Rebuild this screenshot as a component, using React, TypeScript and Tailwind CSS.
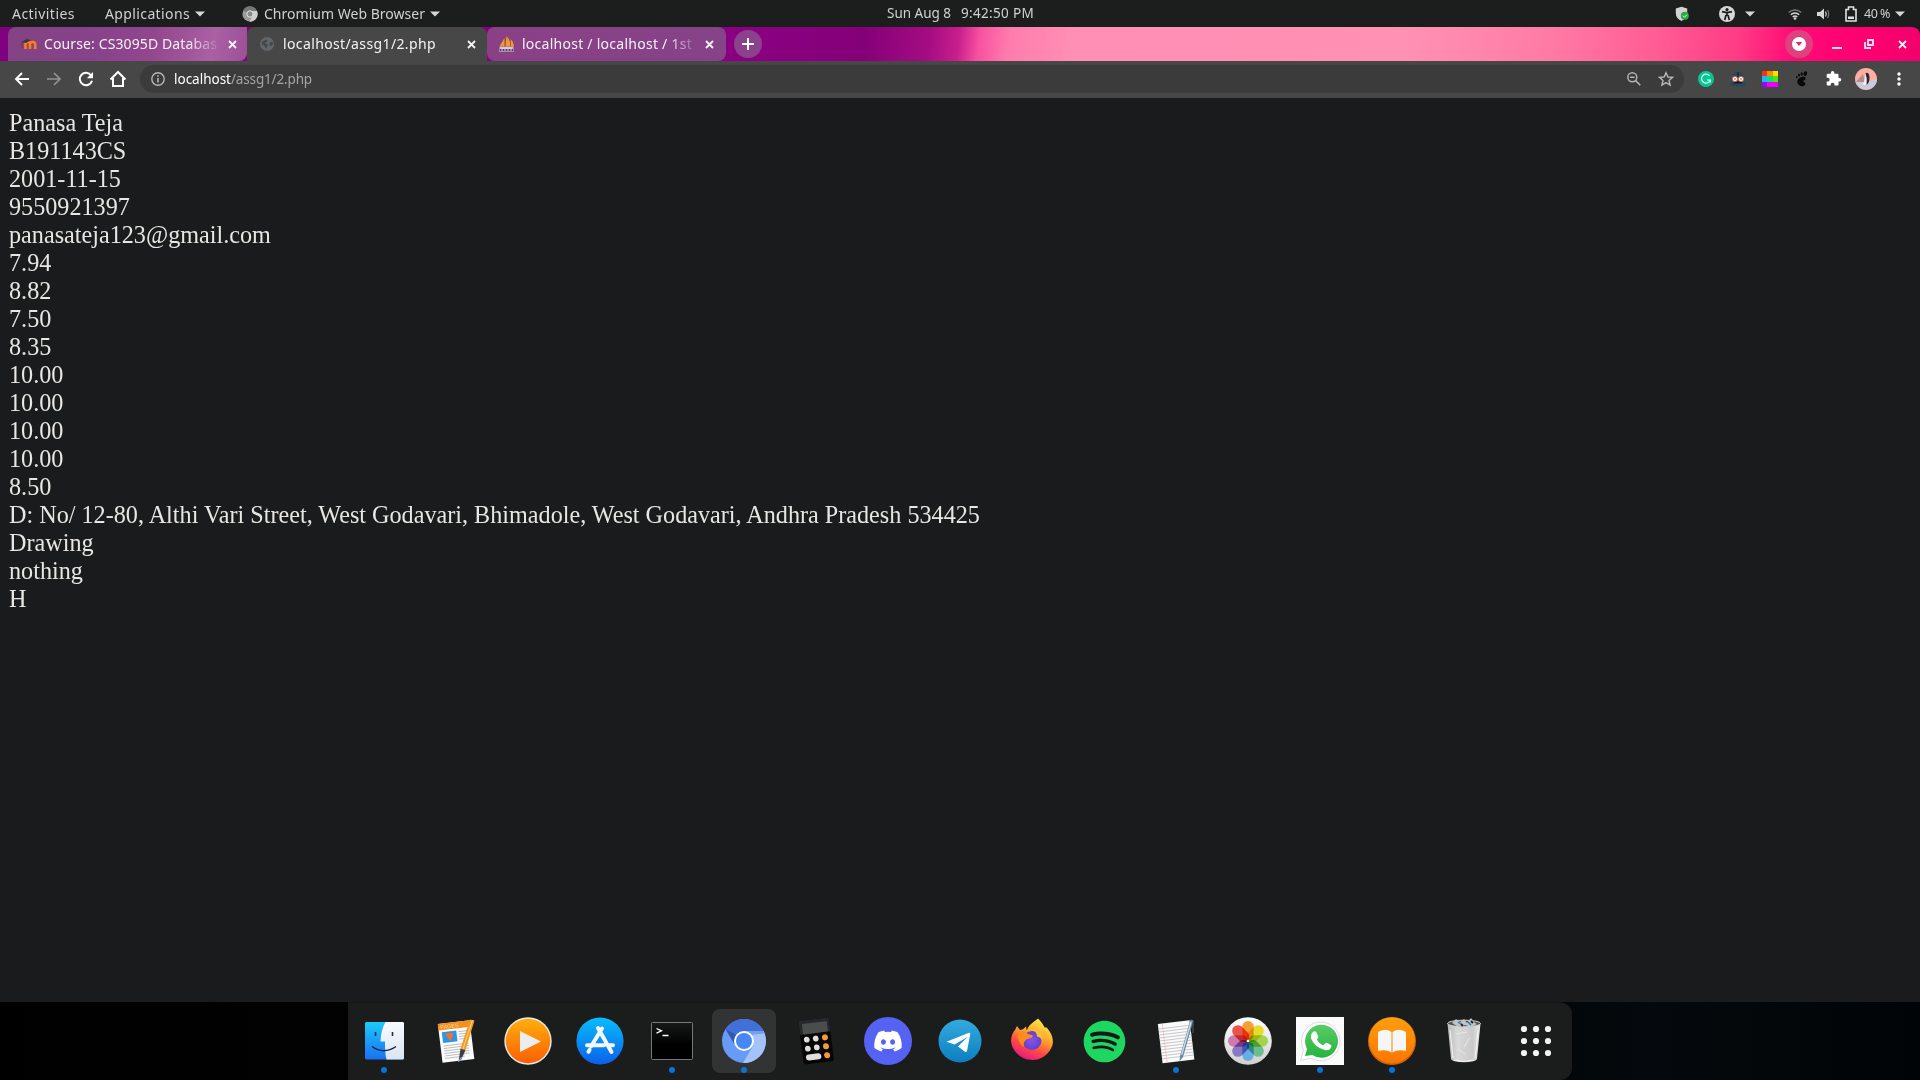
import { useLayoutEffect, useRef, useState } from "react";
import type { ReactNode } from "react";
import { FaDiscord, FaSpotify } from "react-icons/fa";

/* Text that spreads its letters to occupy a given width. */
function Fit({ w, className = "", children }: { w: number; className?: string; children: ReactNode }) {
  const ref = useRef<HTMLSpanElement>(null);
  const [spacing, setSpacing] = useState(0);
  useLayoutEffect(() => {
    const el = ref.current;
    if (!el) return;
    const n = (el.textContent || "").length;
    setSpacing((w - el.getBoundingClientRect().width) / n);
  }, [w]);
  return (
    <span ref={ref} style={{ letterSpacing: `${spacing}px` }} className={`inline-block whitespace-pre ${className}`}>
      {children}
    </span>
  );
}

const Arrow = ({ className = "" }: { className?: string }) => (
  <svg className={`shrink-0 ${className}`} width="10" height="6" viewBox="0 0 10 6">
    <path d="M0 .5h10L5 5.5z" fill="#d6d6d6" />
  </svg>
);

const Cross = ({ className = "" }: { className?: string }) => (
  <svg className={`shrink-0 ${className}`} width="9" height="9" viewBox="0 0 9 9">
    <path d="M1 1l7 7M8 1L1 8" stroke="#f4f4f4" strokeWidth="1.8" />
  </svg>
);

function TopBar() {
  return (
    <header className="flex h-[27px] items-center bg-[#1c1e1d] text-[14px] leading-[27px] text-[#d0d0d0]">
      <div className="flex h-full w-[105px] items-center pl-3"><Fit w={63}>Activities</Fit></div>
      <div className="flex h-full w-[137px] items-center">
        <Fit w={85}>Applications</Fit>
        <Arrow className="ml-[5px]" />
      </div>
      <div className="flex h-full w-[645px] items-center">
        <svg width="16" height="16" viewBox="0 0 16 16" className="mr-[6px]">
          <circle cx="8" cy="8" r="7.6" fill="#9c9c9c" />
          <path d="M8 8L1.2 4.4A7.6 7.6 0 0 1 15 5H8z" fill="#777" />
          <path d="M15 5A7.6 7.6 0 0 1 7.3 15.6L11 9.5 10 5z" fill="#cfcfcf" />
          <circle cx="8" cy="8" r="3.2" fill="#8a8a8a" stroke="#e6e6e6" />
        </svg>
        <Fit w={161}>Chromium Web Browser</Fit>
        <Arrow className="ml-[5px]" />
      </div>
      <div className="flex h-full flex-1 items-center">
        <Fit w={64} className="mr-[10px] text-[13.5px]">Sun Aug 8</Fit>
        <Fit w={73} className="text-[13.5px]">9:42:50 PM</Fit>
      </div>
      <div className="flex h-full w-[245px] items-center">
        <svg width="14" height="16" viewBox="0 0 14 16">
          <path d="M6.500 .8L12.200 2.500V7q0 5.500-5.700 8Q.8 12.500.8 7V2.500z" fill="#d2d2d2" />
          <circle cx="9.800" cy="9.700" r="4" fill="#2fa84a" />
          <path d="M8 9.700l1.500 1.500L12 8.600" fill="none" stroke="#dff5e2" />
        </svg>
        <svg width="16" height="16" viewBox="0 0 16 16" className="ml-[30px]">
          <circle cx="8" cy="8" r="8" fill="#d6d6d6" />
          <circle cx="8" cy="3.600" r="1.600" fill="#1c1c1c" />
          <path d="M3 5.600l3.500.8h3L13 5.600M8 6v4M7 9l-1.300 5M9 9l1.300 5" stroke="#1c1c1c" strokeWidth="1.700" fill="none" />
        </svg>
        <Arrow className="ml-[10px]" />
        <svg width="14" height="12" viewBox="0 0 14 12" className="ml-[33px]">
          <path d="M.8 4.500a9 9 0 0 1 12.400 0" stroke="#777" strokeWidth="1.500" fill="none" />
          <path d="M2.800 6.800a6 6 0 0 1 8.400 0M4.700 9a3.400 3.400 0 0 1 4.600 0" stroke="#d6d6d6" strokeWidth="1.500" fill="none" />
          <circle cx="7" cy="10.500" r="1.300" fill="#d6d6d6" />
        </svg>
        <svg width="13" height="12" viewBox="0 0 13 12" className="ml-[15px]">
          <path d="M0 4h3l4-3.500v11L3 8H0z" fill="#d6d6d6" />
          <path d="M8.500 3.500q1.600 2.500 0 5" stroke="#d6d6d6" strokeWidth="1.200" fill="none" />
          <path d="M10.500 2q2.500 4 0 8" stroke="#777" strokeWidth="1.200" fill="none" />
        </svg>
        <svg width="12" height="16" viewBox="0 0 12 16" className="ml-[15px]">
          <path d="M1 3.500h2.500V1h5v2.500H11V15H1z" fill="none" stroke="#e0e0e0" strokeWidth="1.600" />
          <path d="M3 10.500h6v2.500H3z" fill="#e0e0e0" />
        </svg>
        <Fit w={26} className="ml-[7px] text-[12.5px]">40 %</Fit>
        <Arrow className="ml-[5px]" />
      </div>
    </header>
  );
}

function TabStrip() {
  return (
    <div className="flex h-[34px] rounded-tr-lg bg-[linear-gradient(96deg,#810081_0px,#8b0082_740px,#840078_860px,#a50c82_925px,#c81f8c_955px,#f850a0_975px,#ff7cac_1005px,#ff8fb5_1070px,#ff91b4_1400px,#ff7ba6_1540px,#ff5c94_1650px,#ff3c85_1730px,#ff0b76_1785px,#ff0070_1850px,#f0006b_1920px)] text-[14px] leading-[34px] text-[#f6f2f6]">
      <div className="ml-2 flex h-full w-[239px] items-center rounded-tl-lg rounded-br-lg bg-[linear-gradient(100deg,#834383_0%,#87428a_35%,#92468e_60%,#aa60a3_85%,#9d4f98_100%)] pl-3">
        <svg width="17" height="12" viewBox="0 0 17 12">
          <path d="M5.500 11V6q0-2 2.200-2T10 6v5M10 6q0-2 2.500-2T15.200 6v5" fill="none" stroke="#f98012" strokeWidth="2.600" />
          <path d="M1 4l6-3 4 1-5 3z" fill="#3e3638" />
          <path d="M2 4v6" stroke="#7e3148" />
        </svg>
        <span className="ml-[7px] w-[174px] overflow-hidden [mask-image:linear-gradient(90deg,#000_143px,transparent_178px)]">
          <Fit w={173}>Course: CS3095D Databas</Fit>
        </span>
        <Cross className="ml-[10px]" />
      </div>
      <div className="flex h-full w-[240px] items-center rounded-t-lg bg-[#474747] pl-[13px]">
        <svg width="14" height="14" viewBox="0 0 14 14">
          <circle cx="7" cy="7" r="7" fill="#62666b" />
          <path d="M2 5l3.500-2.500 2 .8-.7 1.700-1.800 1 3 1.500-.5 2-1.500 2-1.500-2.500L2 7.500zM9.500 5.500l3-1 .3 3-1.500 2-1.800-1.500z" fill="#46494c" />
        </svg>
        <Fit w={153} className="ml-[9px]">localhost/assg1/2.php</Fit>
        <Cross className="ml-[30.5px]" />
      </div>
      <div className="flex h-full w-[239px] items-center rounded-lg bg-[linear-gradient(90deg,#8b4086,#854388)] pl-[11px]">
        <svg width="17" height="16" viewBox="0 0 17 16">
          <path d="M6.500 2v8.500H1.500zM8.500 0q4 4 4 10.500H7.500zM12.500 3q4 4 3.500 7.500H13z" fill="#f39a20" />
          <path d="M7.500 2v8.500M12.500 5v5.500" stroke="#8b5a70" strokeWidth=".6" />
          <path d="M1 10.800h15L14 13H3z" fill="#d2c9d2" />
          <path d="M1 14h15" stroke="#d8d0dc" strokeWidth="3" />
          <path d="M1.500 14h15" stroke="#514076" strokeWidth="2" strokeDasharray="2 1" />
        </svg>
        <span className="ml-[7px] w-[174px] overflow-hidden [mask-image:linear-gradient(90deg,#000_145px,transparent_178px)]">
          <Fit w={170}>localhost / localhost / 1st</Fit>
        </span>
        <Cross className="ml-[9px]" />
      </div>
      <div className="ml-2 mt-[3px] flex size-7 items-center justify-center rounded-full bg-[#8b418b]">
        <svg width="12" height="12" viewBox="0 0 12 12"><path d="M6 0v12M0 6h12" stroke="#fff" strokeWidth="2" /></svg>
      </div>
      <div className="ml-auto flex h-full w-[135px] items-center">
        <div className="flex size-7 items-center justify-center rounded-full bg-[#df4080]">
          <svg width="14" height="14" viewBox="0 0 14 14"><circle cx="7" cy="7" r="7" fill="#fff" /><path d="M3.800 5h6.400L7 9z" fill="#df2870" /></svg>
        </div>
        <svg width="12" height="10" viewBox="0 0 12 10" className="ml-[18px]"><path d="M1 9h10" stroke="#fbe3ed" strokeWidth="2" /></svg>
        <svg width="10" height="10" viewBox="0 0 10 10" className="ml-[21px]">
          <path d="M4 1h5v5H4zM1 3v6h6" fill="none" stroke="#fbe3ed" strokeWidth="1.800" />
        </svg>
        <Cross className="ml-[23.5px]" />
      </div>
    </div>
  );
}

function Toolbar() {
  return (
    <div className="flex h-[37px] items-center bg-[#474747] pb-px pl-[14px]">
      <svg width="16" height="14" viewBox="0 0 16 14"><path d="M15 7H2M8 1L2 7l6 6" stroke="#fff" strokeWidth="1.900" fill="none" /></svg>
      <svg width="16" height="14" viewBox="0 0 16 14" className="ml-4"><path d="M1 7h13M8 1l6 6-6 6" stroke="#929292" strokeWidth="1.700" fill="none" /></svg>
      <svg width="16" height="16" viewBox="0 0 16 16" className="ml-4">
        <path d="M13.200 4.500A6.200 6.200 0 1 0 14 9.700" stroke="#fff" strokeWidth="2" fill="none" />
        <path d="M15 1v6.200H8.800z" fill="#fff" />
      </svg>
      <svg width="18" height="18" viewBox="0 0 18 18" className="ml-[15px]">
        <path d="M1.500 9.500L9 2l7.500 7.500M4 8v8h10V8" stroke="#fff" strokeWidth="2" fill="none" />
      </svg>
      <div className="ml-[13px] flex h-7 w-[1544px] items-center rounded-full bg-[#3b3b3b] pl-[11px] text-[13.5px] leading-7">
        <svg width="14" height="14" viewBox="0 0 14 14">
          <circle cx="7" cy="7" r="6.200" fill="none" stroke="#b6b6b6" strokeWidth="1.400" />
          <path d="M7 6v4.500M7 3.300v1.500" stroke="#b6b6b6" strokeWidth="1.600" />
        </svg>
        <Fit w={57} className="ml-[9px] text-white">localhost</Fit>
        <Fit w={81} className="text-[#a5a5a5]">/assg1/2.php</Fit>
        <svg width="14" height="14" viewBox="0 0 14 14" className="ml-auto">
          <circle cx="5.300" cy="5.300" r="4.500" fill="none" stroke="#b4b4b4" strokeWidth="1.500" />
          <path d="M8.600 8.600l4.700 4.700M3 5.300h4.600" stroke="#b4b4b4" strokeWidth="1.500" />
        </svg>
        <svg width="16" height="16" viewBox="0 0 16 16" className="ml-[17px] mr-[10px]">
          <path d="M8 1.800l1.900 4.200 4.600.4-3.500 3 1.100 4.600L8 11.600 3.900 14 5 9.400 1.500 6.400 6.100 6z" fill="none" stroke="#b8b8b8" strokeWidth="1.400" />
        </svg>
      </div>
      <div className="ml-[14px] flex items-center gap-4">
        <svg width="16" height="16" viewBox="0 0 16 16">
          <circle cx="8" cy="8" r="8" fill="#06c894" />
          <path d="M11.500 4.800A4.500 4.500 0 1 0 12.300 9H9M12.300 8.500v3" fill="none" stroke="#e9fff7" strokeWidth="1.200" />
        </svg>
        <svg width="16" height="16" viewBox="0 0 16 16">
          <path d="M2.500 8Q2 1 8 1t5.500 7L16 14q-4 1.500-8 1.500T0 14z" fill="#23495b" />
          <path d="M8 1v7M4 12h8l-2-4H6z" stroke="#101d29" fill="#142232" />
          <circle cx="5" cy="8" r="2.600" fill="#fff" stroke="#e0604a" />
          <circle cx="11" cy="8" r="2.600" fill="#fff" stroke="#e0604a" />
          <path d="M5 7.200v1.600M11 7.200v1.600" stroke="#444" />
        </svg>
        <svg width="16" height="16" viewBox="0 0 16 16" shapeRendering="crispEdges">
          <path d="M0 0h5v5H0z" fill="#ff3200" /><path d="M5 0h6v5H5z" fill="#ff8a00" /><path d="M11 0h5v5h-5z" fill="#ffdf00" />
          <path d="M0 5h5v6H0z" fill="#18b9ff" /><path d="M5 5h6v6H5z" fill="#13dc78" /><path d="M11 5h5v6h-5z" fill="#4fe800" />
          <path d="M0 11h5v5H0z" fill="#9d00ff" /><path d="M5 11h11v5H5z" fill="#ef00ff" />
        </svg>
        <svg width="16" height="16" viewBox="0 0 16 16">
          <path d="M11.500 6.500c1 2.500-2.500 2.700-2.300 4 .3 1.200 2 .3 2.100 1.800.2 2-1.500 3.200-3.300 3-3-.3-5-3-4.700-5.300C3.700 6.500 10.500 4.500 11.500 6.500z" fill="#080808" />
          <ellipse cx="11.300" cy="2.600" rx="1.700" ry="2.400" fill="#080808" transform="rotate(15 11.300 2.600)" />
          <ellipse cx="7.700" cy="3" rx="1.100" ry="1.700" fill="#080808" />
          <ellipse cx="5" cy="4.200" rx=".9" ry="1.400" fill="#080808" />
          <ellipse cx="2.800" cy="6.200" rx=".8" ry="1.100" fill="#080808" />
        </svg>
        <svg width="16" height="16" viewBox="1 1 23 23">
          <path d="M20.500 11H19V7c0-1.100-.9-2-2-2h-4V3.500a2.500 2.500 0 0 0-5 0V5H4c-1.100 0-2 .9-2 2v3.800h1.500a2.700 2.700 0 0 1 0 5.400H2V20c0 1.100.9 2 2 2h3.800v-1.500a2.700 2.700 0 0 1 5.400 0V22H17c1.100 0 2-.9 2-2v-4h1.500a2.500 2.500 0 0 0 0-5z" fill="#fff" />
        </svg>
      </div>
      <svg width="22" height="22" viewBox="0 0 22 22" className="ml-[13px]">
        <circle cx="11" cy="11" r="11" fill="#ffada0" />
        <path d="M.5 14L8 8l5 5 9-2a11 11 0 0 1-21.500 3z" fill="#c9cadd" />
        <path d="M1 14l7-8 2 8z" fill="#b28d8b" />
        <path d="M10.500 5q3-1 3 3 1 6-2 9l-4-.5q3-5 3-11.500z" fill="#f6f1ee" />
        <path d="M10.500 5q4-1 4 5 0 5-3 7 1-6-1-12z" fill="#292b30" />
      </svg>
      <svg width="4" height="14" viewBox="0 0 4 14" className="ml-[19.5px]">
        <circle cx="2" cy="2" r="1.700" fill="#fff" /><circle cx="2" cy="7" r="1.700" fill="#fff" /><circle cx="2" cy="12" r="1.700" fill="#fff" />
      </svg>
    </div>
  );
}

const LINES = [
  "Panasa Teja", "B191143CS", "2001-11-15", "9550921397", "panasateja123@gmail.com",
  "7.94", "8.82", "7.50", "8.35", "10.00", "10.00", "10.00", "10.00", "8.50",
  "D: No/ 12-80, Althi Vari Street, West Godavari, Bhimadole, West Godavari, Andhra Pradesh 534425",
  "Drawing", "nothing", "H",
];

const S = ({ children }: { children: ReactNode }) => (
  <svg width="48" height="48" viewBox="0 0 48 48">{children}</svg>
);

const PETALS = ["#f7941d", "#e4dc12", "#9fce3b", "#5fb98a", "#5aa9e6", "#7f6cc0", "#cc6da5", "#ee4136"];

const ICONS: { icon: ReactNode; running?: boolean; active?: boolean }[] = [
  {
    running: true,
    icon: (
      <S>
        <defs><linearGradient id="fa" x2="0" y2="1"><stop stopColor="#1ccbfa" /><stop offset="1" stopColor="#1b6ff2" /></linearGradient>
          <linearGradient id="fb" x2="0" y2="1"><stop stopColor="#fafbfc" /><stop offset="1" stopColor="#d9e5f4" /></linearGradient></defs>
        <rect x="5" y="5" width="39" height="37.500" rx="1.500" fill="url(#fa)" />
        <path d="M25.500 5H42.500q1.500 0 1.500 1.500V41q0 1.500-1.500 1.500H26.500q-1.700-6-1.500-18h-4.500q.5-12 5-19.500z" fill="url(#fb)" />
        <path d="M15.500 15v4M32.500 15v4" stroke="#12314f" strokeWidth="1.600" />
        <path d="M12 29.500q11.500 8.500 24 0" fill="none" stroke="#10243d" strokeWidth="1.300" />
      </S>
    ),
  },
  {
    icon: (
      <S>
        <g transform="rotate(-7 24 24)">
          <rect x="8" y="5" width="32" height="39" fill="#fbfbfb" />
          <rect x="8" y="5" width="32" height="6.500" fill="#f58f1d" />
          <text x="10" y="10.500" fontSize="5.500" fill="#ffd9a6" fontFamily="Liberation Sans">PAGES</text>
          <rect x="11" y="13.500" width="14.500" height="11" fill="#2a96e8" />
          <path d="M14 15.500h8.500l-2 5-2 2.500-2-2.500z" fill="#f4702c" />
          <path d="M27.500 15h9M27.500 17.500h9M27.500 20h9M27.500 22.500h9M11 27.500h25M11 30h25M11 32.500h25M11 35h25M11 37.500h25M11 40h20" stroke="#b9b9b9" strokeWidth=".9" />
        </g>
        <path d="M38 2.500l4.500 1L33.500 33l-5-1.300z" fill="#f49a22" />
        <path d="M40 3l1 .3L31.500 32l-1-.3z" fill="#ffd28a" />
        <path d="M28.500 31.700l5 1.300-4 9-3 3z" fill="#3b3f47" />
        <path d="M29.500 40l-3 5" stroke="#a7bdd3" />
      </S>
    ),
  },
  {
    icon: (
      <S>
        <defs><linearGradient id="pl" x2="0" y2="1"><stop stopColor="#ffae0c" /><stop offset="1" stopColor="#fb5f04" /></linearGradient></defs>
        <circle cx="24" cy="24" r="23.700" fill="#ececec" /><circle cx="24" cy="24" r="22.300" fill="url(#pl)" />
        <path d="M16 14l21 10.500L16 35z" fill="#ededed" />
      </S>
    ),
  },
  {
    icon: (
      <S>
        <defs><linearGradient id="as" x2="0" y2="1"><stop stopColor="#09bdfc" /><stop offset="1" stopColor="#0b60e9" /></linearGradient></defs>
        <circle cx="24" cy="24" r="23.600" fill="url(#as)" />
        <path d="M26 11.500L15 29.500M22 11l13.500 24M11 28.200h17M33 28.200h4M13.500 33l-1 1.800" stroke="#f2f8fd" strokeWidth="4" strokeLinecap="round" />
      </S>
    ),
  },
  {
    running: true,
    icon: (
      <S>
        <defs><linearGradient id="te" x2="0" y2="1"><stop stopColor="#171818" /><stop offset=".6" stopColor="#000" /></linearGradient></defs>
        <rect x="3.500" y="5.500" width="41" height="37" rx="1" fill="url(#te)" stroke="#737a7a" />
        <path d="M8.500 11.500l5 2.300-5 2.300M14.500 18.500h6" fill="none" stroke="#fff" strokeWidth="1.300" />
      </S>
    ),
  },
  {
    running: true,
    active: true,
    icon: (
      <S>
        <circle cx="24" cy="24" r="22" fill="#679bf6" />
        <path d="M5.500 12A22 22 0 0 1 43.500 14H24L15 28z" fill="#4170d9" />
        <path d="M5.500 12L15 28l3-9z" fill="#3157ae" />
        <path d="M43.500 14A22 22 0 0 1 23 46L33.500 28 32 18l-8-4z" fill="#a4c3fb" />
        <path d="M24 14h19.500l1 2.500L31 18z" fill="#769fe8" />
        <circle cx="24" cy="24" r="10" fill="#fff" /><circle cx="24" cy="24" r="8" fill="#4687f4" />
      </S>
    ),
  },
  {
    icon: (
      <S>
        <g transform="rotate(-7 24 24)">
          <rect x="9" y="2" width="30.500" height="44" rx="2.500" fill="#050505" />
          <path d="M9 4.500q0-2.500 2.500-2.500H37q2.500 0 2.500 2.500V16H9z" fill="#27282b" />
          <rect x="12" y="5.500" width="25" height="10.500" rx="1" fill="#4b4c4c" />
          <g fill="#dedede"><circle cx="15" cy="21.500" r="2.900" /><circle cx="24" cy="21.500" r="2.900" /><circle cx="15" cy="30.500" r="2.900" /><circle cx="24" cy="30.500" r="2.900" /><rect x="12" y="36.500" width="15.500" height="6" rx="3" /></g>
          <g fill="#f79a31"><circle cx="33.300" cy="21.500" r="3" /><circle cx="33.300" cy="30.500" r="3" /><circle cx="33.300" cy="39.500" r="3" /></g>
        </g>
      </S>
    ),
  },
  {
    icon: (
      <div className="flex size-12 items-center justify-center rounded-full bg-[#5562f4]"><FaDiscord size={30} color="#fff" /></div>
    ),
  },
  {
    icon: (
      <S>
        <defs><linearGradient id="tg" x2="0" y2="1"><stop stopColor="#34a9df" /><stop offset="1" stopColor="#0c7fbf" /></linearGradient></defs>
        <circle cx="24" cy="24" r="21.500" fill="url(#tg)" />
        <path d="M10.500 24.700L33 15.800q1.500-.4 1.200 1.600L31 34q-.5 1.500-2 .7l-7-5.200 9.500-9.500L18.500 27.500z" fill="#fff" />
      </S>
    ),
  },
  {
    icon: (
      <S>
        <defs><linearGradient id="ff" x1=".8" x2=".3" y2="1"><stop stopColor="#fff04d" /><stop offset=".4" stopColor="#ffa72a" /><stop offset=".7" stopColor="#ff4a43" /><stop offset="1" stopColor="#e31587" /></linearGradient>
          <radialGradient id="fp"><stop stopColor="#8d50ee" /><stop offset="1" stopColor="#5a45c9" /></radialGradient></defs>
        <path d="M30 1.500c4 4 5.500 7 7 9.500l1-1c5 5 8 11 6.500 18A21.300 21.300 0 0 1 3 24c0-5 2-9 4-11l2-4 3 4 3-.8 3-2.700.8 4C21 7 25 6 30 1.500z" fill="url(#ff)" />
        <circle cx="24" cy="23.500" r="9.500" fill="url(#fp)" />
        <path d="M10 14q6-1.500 10 3l5 1.500q-1 3-6 3.500-4.500 3-3 8-7-4-6-16z" fill="#ff8b1f" />
        <path d="M25 13q9-1 10 12-2-5-6-5.500 0-4-4-6.500z" fill="#ffbd36" />
      </S>
    ),
  },
  {
    icon: (
      <div className="flex size-[42px] items-center justify-center rounded-full bg-[#181818]"><FaSpotify size={43} color="#1ed760" className="shrink-0" /></div>
    ),
  },
  {
    running: true,
    icon: (
      <S>
        <g transform="rotate(-7 24 24)">
          <rect x="8" y="5" width="32" height="39.500" fill="#fafafa" />
          <path d="M8 10h32M8 13h32M8 16h32M8 19h32M8 22h32M8 25h32M8 28h32M8 31h32M8 34h32M8 37h32M8 40h32" stroke="#c4c5c8" strokeWidth=".9" />
          <path d="M12.500 5v39.500" stroke="#f3b9b4" strokeWidth=".7" />
        </g>
        <path d="M38.500 2.500l3 1L31 40l-3.500 4.500L28 39z" fill="#71879b" />
        <path d="M38.500 4.500l1.300.4-9.500 33-1.300-.5z" fill="#c4e0f3" />
        <path d="M41 5v11" stroke="#52616d" />
      </S>
    ),
  },
  {
    icon: (
      <S>
        <defs><linearGradient id="ph" x2="0" y2="1"><stop stopColor="#fff" /><stop offset="1" stopColor="#d0d0d0" /></linearGradient></defs>
        <circle cx="24" cy="24" r="23.800" fill="url(#ph)" />
        <g className="isolate">
          {PETALS.map((c, i) => (
            <rect key={c} x="18.300" y="4" width="11.400" height="19.500" rx="5.700" fill={c} opacity=".9" transform={`rotate(${i * 45} 24 24)`} className="mix-blend-multiply" />
          ))}
        </g>
        <circle cx="24" cy="24" r="1.300" fill="#fff" />
      </S>
    ),
  },
  {
    running: true,
    icon: (
      <S>
        <defs><linearGradient id="wa" x2="0" y2="1"><stop stopColor="#5bcb68" /><stop offset="1" stopColor="#26b43d" /></linearGradient></defs>
        <rect width="48" height="48" fill="#fafafa" />
        <path d="M4.500 43.500l3-10.500A19.300 19.300 0 1 1 15 41z" fill="#fff" stroke="#dedede" />
        <path d="M9 39l2-7A16.500 16.500 0 1 1 16.500 38z" fill="url(#wa)" />
        <path d="M17 15q2-1.700 3.300.2l2 4.200q.5 1-1.500 3.200 2 4 6.400 6l2-2.300q.8-.8 2-.2l3.800 2q1 .6-.2 3-2 3-6 2-10-2.500-13.700-11.500-.8-4.500 1.900-6.600z" fill="#fff" />
      </S>
    ),
  },
  {
    running: true,
    icon: (
      <S>
        <defs><linearGradient id="bk" x2="0" y2="1"><stop stopColor="#ff9e0b" /><stop offset="1" stopColor="#fb7603" /></linearGradient></defs>
        <circle cx="24" cy="24" r="24" fill="#d86406" /><circle cx="24" cy="23.300" r="23" fill="url(#bk)" />
        <path d="M10 16q0-1 1-1.500 7-3.500 12.500.5v20.500q-4.500-3.500-13.500-1.700zM38 16q0-1-1-1.500-7-3.500-12.500.5v20.500q4.500-3.500 13.500-1.700z" fill="#f6f6f6" />
      </S>
    ),
  },
  {
    icon: (
      <S>
        <defs><linearGradient id="tr" x2="1" y2="0"><stop stopColor="#b7b7b7" /><stop offset=".3" stopColor="#d9d9d9" /><stop offset=".75" stopColor="#cacaca" /><stop offset="1" stopColor="#e6e6e6" /></linearGradient></defs>
        <path d="M7.500 6.500h33L37 42q-.5 3-13 3.300Q11.500 45 11 42z" fill="url(#tr)" />
        <ellipse cx="24" cy="6.500" rx="16.500" ry="3.300" fill="#4d5052" stroke="#d8d8d8" />
        <path d="M12 6l4-4 4 3 4-3 3 4 4-5 4 5 2 1-6 3-6-2-5 3z" fill="#bfc3c4" />
        <path d="M18 5l3 2M28 5l3 3" stroke="#267dab" strokeWidth="1.500" />
        <path d="M21 7l2 2M31 4l2 2" stroke="#2c2127" strokeWidth="2" />
        <path d="M10 13l3 28M38 13l-3 28M14 43q10 3 20 0" stroke="#f4f4f4" fill="none" />
        <path d="M16 17l11-2M18 32l7 5M30 20l-6 10" stroke="#e8e8e8" />
      </S>
    ),
  },
  {
    icon: (
      <S>
        {[12, 24, 36].map((y) => [12, 24, 36].map((x) => <circle key={`${x}-${y}`} cx={x} cy={y} r="3.100" fill="#f3f3f3" />))}
      </S>
    ),
  },
];

function Dock() {
  return (
    <div className="flex h-[78px] bg-[linear-gradient(90deg,#000_0px,#020203_348px,#02070a_1560px,#05090d_1650px,#010406_1920px)]">
      <div className="ml-[348px] flex h-full rounded-r-xl border-t border-[#161718] bg-[#1b1d1d]">
        {ICONS.map((d, i) => (
          <div key={i} className="relative flex w-[72px] justify-center pt-[6px]">
            <div className={`flex size-16 items-center justify-center rounded-lg ${d.active ? "bg-[#323434]" : ""}`}>{d.icon}</div>
            {d.running && <span className="absolute top-[64px] size-[6px] rounded-full bg-[#0873d6]" />}
          </div>
        ))}
      </div>
    </div>
  );
}

export default function App() {
  return (
    <div className="flex h-[1080px] w-[1920px] flex-col overflow-hidden bg-[#191b1c] font-['Noto_Sans',sans-serif]">
      <TopBar />
      <TabStrip />
      <Toolbar />
      <main className="flex-1 pl-[9px] pt-[11px] font-['Liberation_Serif',serif] text-[24.18px] leading-[28px] text-[#e8e6e3]">
        {LINES.map((line, i) => (
          <p key={i} className="whitespace-nowrap">{line}</p>
        ))}
      </main>
      <Dock />
    </div>
  );
}
